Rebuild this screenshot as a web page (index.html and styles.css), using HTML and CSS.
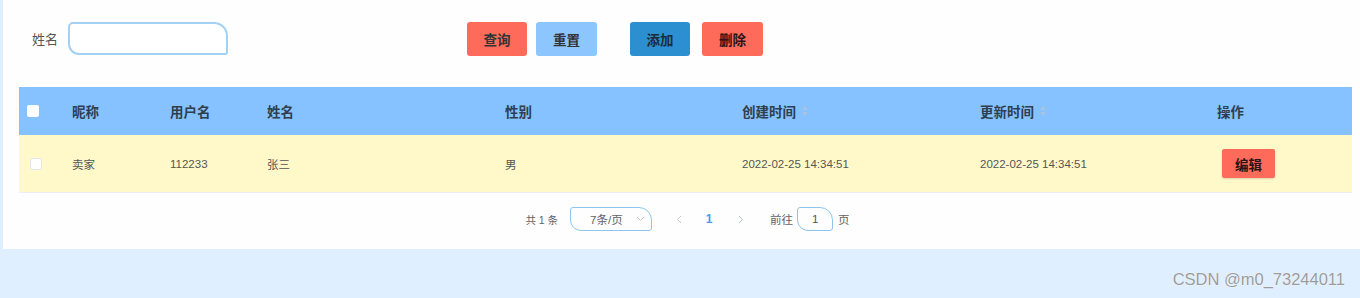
FILE: index.html
```html
<html>
  <head>
    <meta charset="utf-8">
    <link rel="stylesheet" href="styles.css">
  </head>
  <body>
    <div class="panel">
      <div class="search">
        <span class="label">姓名</span>
        <input class="name-input" type="text">
        <button class="btn btn-red btn-query">查询</button>
        <button class="btn btn-light btn-reset">重置</button>
        <button class="btn btn-blue btn-add">添加</button>
        <button class="btn btn-red btn-del">删除</button>
      </div>

      <div class="table">
        <div class="tr thead">
          <div class="cell cell-check"><span class="check"></span></div>
          <div class="cell">昵称</div>
          <div class="cell">用户名</div>
          <div class="cell">姓名</div>
          <div class="cell">性别</div>
          <div class="cell">创建时间<span class="sort"><i class="up"></i><i class="down"></i></span></div>
          <div class="cell">更新时间<span class="sort"><i class="up"></i><i class="down"></i></span></div>
          <div class="cell">操作</div>
        </div>
        <div class="tr tbody">
          <div class="cell cell-check"><span class="check check-row"></span></div>
          <div class="cell">卖家</div>
          <div class="cell">112233</div>
          <div class="cell">张三</div>
          <div class="cell">男</div>
          <div class="cell">2022-02-25 14:34:51</div>
          <div class="cell">2022-02-25 14:34:51</div>
          <div class="cell"><button class="btn-edit">编辑</button></div>
        </div>
      </div>

      <div class="pager">
        <span class="total">共 1 条</span>
        <div class="sizes">
          <span>7条/页</span>
          <svg class="arrow" width="9" height="6" viewBox="0 0 9 6"><polyline points="1,1 4.5,4.5 8,1" fill="none" stroke="#c0c4cc" stroke-width="1"/></svg>
        </div>
        <span class="pg pg-prev"><svg width="6" height="9" viewBox="0 0 6 9"><polyline points="5,1 1.5,4.5 5,8" fill="none" stroke="#c0c4cc" stroke-width="1"/></svg></span>
        <span class="pg pg-num">1</span>
        <span class="pg pg-next"><svg width="6" height="9" viewBox="0 0 6 9"><polyline points="1,1 4.5,4.5 1,8" fill="none" stroke="#c0c4cc" stroke-width="1"/></svg></span>
        <span class="goto">前往</span>
        <div class="jump">1</div>
        <span class="page-word">页</span>
      </div>
    </div>
    <div class="mark">CSDN @m0_73244011</div>
  </body>
</html>
```

FILE: styles.css
```css
body{
  margin: 0;
  background-color: #e0efff;
  font-family: "Liberation Sans", "Noto Sans CJK SC", sans-serif;
  height: 298px;
  overflow: hidden;
  position: relative;
}
.panel{
  background-color: #fefefe;
  margin-left: 3px;
  height: 249px;
  padding: 21px 8px 0 16px;
  box-sizing: border-box;
}
.search{
  display: flex;
  align-items: center;
  height: 34px;
}
.label{
  margin-left: 13px;
  font-size: 13px;
  color: #555;
}
.name-input{
  margin-left: 10px;
  width: 160px;
  height: 33px;
  box-sizing: border-box;
  border: 2px solid #a3d1f3;
  border-radius: 5px 14px 3px 11px;
  background: #fff;
  outline: none;
}
.btn{
  height: 34px;
  width: 60px;
  border: none;
  border-radius: 3px;
  font-family: "Noto Sans CJK SC", sans-serif;
  font-size: 13.5px;
  font-weight: bold;
  color: #333;
  padding: 0;
  margin-top: 2px;
}
.btn-red{ background-color: #ff6b5b; }
.btn-light{ background-color: #8dc5ff; }
.btn-blue{ background-color: #2b8fd0; color: #1c2b3a; }
.btn-query{ margin-left: 239px; }
.btn-reset{ margin-left: 9px; width: 61px; }
.btn-add{ margin-left: 33px; }
.btn-del{ margin-left: 12px; width: 61px; color: #2a1414; }

.table{
  margin-top: 32px;
}
.tr{
  display: grid;
  grid-template-columns: 41px 98px 97px 238px 237px 238px 237px 1fr;
  align-items: center;
}
.thead{
  height: 48px;
  background-color: #85c2ff;
  font-family: "Noto Sans CJK SC", sans-serif;
  font-size: 13.5px;
  font-weight: bold;
  color: #2f3f50;
}
.tbody{
  height: 58px;
  background-color: #fff9c9;
  border-bottom: 1px solid #ebeef5;
  box-sizing: border-box;
  font-size: 11.5px;
  color: #555;
}
.cell{
  padding-left: 12px;
  display: flex;
  align-items: center;
}
.cell-check{
  padding-left: 8px;
}
.check{
  width: 12px;
  height: 12px;
  background: #fff;
  border-radius: 2px;
  display: inline-block;
}
.check-row{
  margin-left: 3px;
  margin-top: 1px;
  box-sizing: border-box;
  border: 1px solid #e4e6ea;
}
.sort{
  display: inline-flex;
  flex-direction: column;
  margin-left: 6px;
  gap: 2px;
}
.sort i{
  width: 0;
  height: 0;
  border-left: 3px solid transparent;
  border-right: 3px solid transparent;
}
.sort .up{ border-bottom: 4px solid #a9c3de; }
.sort .down{ border-top: 4px solid #a9c3de; }
.btn-edit{
  margin-left: 5px;
  width: 53px;
  height: 29px;
  border: none;
  border-radius: 2px;
  background-color: #ff6b5b;
  box-shadow: 0 1px 2px rgba(0,0,0,0.15);
  font-family: "Noto Sans CJK SC", sans-serif;
  font-weight: bold;
  font-size: 13.5px;
  color: #2a1414;
  padding: 0;
}

.pager{
  display: flex;
  justify-content: center;
  align-items: center;
  margin-top: 14px;
  height: 24px;
  font-size: 11.5px;
  color: #606266;
  padding-left: 4px;
}
.total{
  font-size: 10.5px;
}
.sizes{
  margin-left: 12px;
  width: 82px;
  height: 24px;
  box-sizing: border-box;
  border: 1.5px solid #8cc6f0;
  border-radius: 3px 13px 3px 11px;
  display: flex;
  align-items: center;
  padding-left: 19px;
}
.sizes .arrow{
  margin-left: 13px;
}
.pg{
  width: 30px;
  text-align: center;
  display: flex;
  justify-content: center;
  align-items: center;
}
.pg-prev{ margin-left: 12px; }
.pg-num{
  color: #409eff;
  font-weight: bold;
  font-size: 12px;
}
.pg-next{ margin-left: 2px; }
.goto{ margin-left: 14px; }
.jump{
  margin-left: 4px;
  width: 36px;
  height: 24px;
  box-sizing: border-box;
  border: 1.5px solid #8cc6f0;
  border-radius: 3px 13px 3px 11px;
  display: flex;
  justify-content: center;
  align-items: center;
  color: #555;
}
.page-word{ margin-left: 5px; }

.mark{
  position: absolute;
  right: 15px;
  top: 270px;
  font-size: 16.5px;
  color: #9c9c9c;
  text-shadow: 0 0 1px #fff;
}
```
